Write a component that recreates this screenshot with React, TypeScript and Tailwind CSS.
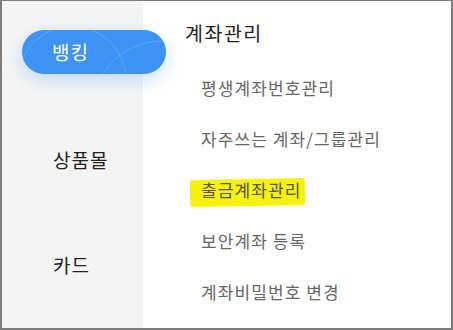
import React from "react";

const font = { fontFamily: '"Noto Sans CJK KR", "Noto Sans", sans-serif' };

const subMenus = [
  "평생계좌번호관리",
  "자주쓰는 계좌/그룹관리",
  "출금계좌관리",
  "보안계좌 등록",
  "계좌비밀번호 변경",
];

const PillArcs = () => (
  <svg
    className="absolute inset-0"
    width="144"
    height="44"
    viewBox="0 0 144 44"
    fill="none"
  >
    <circle cx="50" cy="50" r="54" stroke="rgba(255,255,255,0.16)" strokeWidth="1" />
    <circle cx="140" cy="80" r="69" stroke="rgba(255,255,255,0.16)" strokeWidth="1" />
  </svg>
);

export default function App() {
  return (
    <div
      className="flex w-[453px] h-[330px] border-t border-l-2 border-r-2 border-b-2 border-[#7d7d7d] bg-white overflow-hidden"
      style={font}
    >
      {/* left category column */}
      <div className="relative z-10 flex flex-col w-[141px] shrink-0 bg-[#f4f4f4] pl-5">
        <div className="relative flex items-center mt-[29px] w-[144px] h-[44px] shrink-0 pl-[30px] rounded-full bg-[#3e92f4] overflow-hidden shadow-[0_6px_18px_rgba(62,146,244,0.28)]">
          <PillArcs />
          <span className="relative text-[19px] tracking-[1px] leading-[28px] text-white">뱅킹</span>
        </div>
        <div className="mt-[72px] pl-[31px] h-[28px] leading-[28px] text-[19px] tracking-[1px] text-[#222]">
          상품몰
        </div>
        <div className="mt-[77px] pl-[31px] h-[28px] leading-[28px] text-[19px] tracking-[1px] text-[#222]">
          카드
        </div>
      </div>

      {/* right sub menu */}
      <div className="flex flex-col flex-1 pl-[42px] pt-[18px]">
        <div className="h-[28px] leading-[28px] text-[19.5px] tracking-[1.5px] text-[#222]">
          계좌관리
        </div>
        <ul className="mt-[29px] flex flex-col gap-[27px] pl-[16px]">
          {subMenus.map((m) =>
            m === "출금계좌관리" ? (
              <li key={m} className="h-[24px] leading-[24px] text-[17px] tracking-[1.1px] text-[#555]">
                <span className="relative inline-block">
                  <span className="absolute -left-[11px] -right-[4px] top-[1px] bottom-[-4px] bg-[#f6f20c] rounded-[3px] -rotate-1" />
                  <span className="relative">{m}</span>
                </span>
              </li>
            ) : (
              <li key={m} className="h-[24px] leading-[24px] text-[17px] tracking-[1.1px] text-[#666]">
                {m}
              </li>
            )
          )}
        </ul>
      </div>
    </div>
  );
}
